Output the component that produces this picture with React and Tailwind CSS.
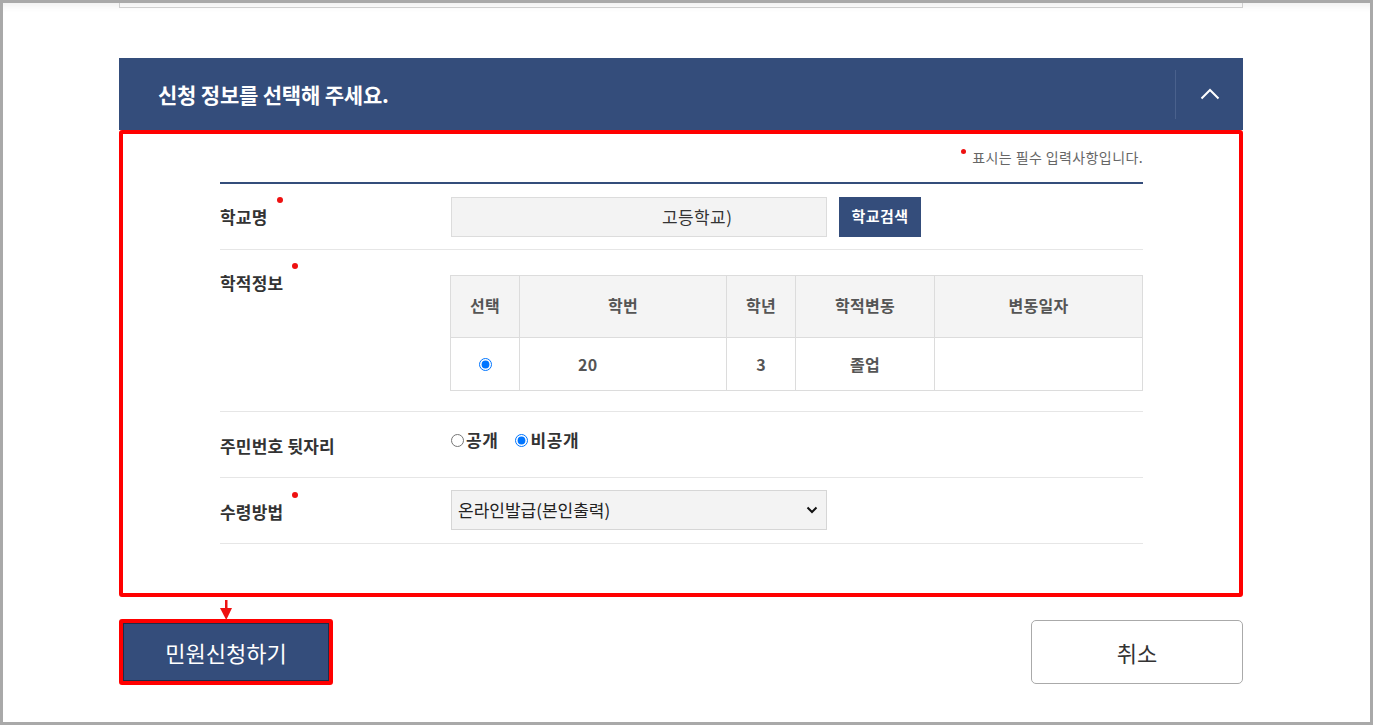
import { useState } from "react";

const Dot = () => (
  <span className="absolute -right-[15px] -top-[8px] w-[6px] h-[6px] rounded-full bg-[#ee1111]" />
);

function Label({ children, required }) {
  return (
    <span className="relative inline-block text-[17px] leading-[24px] font-bold text-[#333] tracking-[0.2px]">
      {children}
      {required && <Dot />}
    </span>
  );
}

export default function App() {
  const [privacy, setPrivacy] = useState("private");

  return (
    <div className="w-[1373px] h-[725px] border-[3px] border-[#a9a9a9] bg-white overflow-hidden shadow-[inset_0_10px_8px_-8px_rgba(0,0,0,0.08)] font-['Noto_Sans_CJK_KR',sans-serif] text-[#333]">
      <div className="ml-[116px] w-[1124px] relative">
        {/* previous box, scrolled off */}
        <div className="h-[5px] border-x border-b border-[#cfcfcf]" />

        {/* section header */}
        <div className="mt-[50px] h-[72px] bg-[#344d7b] flex items-center">
          <h2 className="flex-1 pl-[39px] text-white text-[21px] leading-[28px] font-bold tracking-[-0.2px]">
            신청 정보를 선택해 주세요.
          </h2>
          <div className="w-px h-[49px] bg-[#4a618c]" />
          <div className="w-[67px] flex justify-center">
            <svg width="20" height="12" viewBox="0 0 20 12" fill="none">
              <path d="M1.5 10.5 L10 2 L18.5 10.5" stroke="#fff" strokeWidth="2" />
            </svg>
          </div>
        </div>

        {/* form body (highlighted) */}
        <div className="h-[467px] border-4 border-[#ff0000] rounded-[3px]">
          <div className="ml-[97px] w-[923px]">
            <div className="pt-[13px] flex justify-end items-center text-[14px] leading-[20px] text-[#666] tracking-[0.4px]">
              <span className="relative mr-[6px] -top-[6px] w-[5px] h-[5px] rounded-full bg-[#ee1111]" />
              표시는 필수 입력사항입니다.
            </div>
            <div className="mt-[15px] h-[2px] bg-[#344d7b]" />

            {/* 학교명 */}
            <div className="h-[66px] flex items-center border-b border-[#e6e6e6]">
              <div className="w-[231px]">
                <Label required>학교명</Label>
              </div>
              <div className="w-[376px] h-[40px] bg-[#f3f3f3] border border-[#dcdcdc] flex items-center pl-[210px] text-[17px] tracking-[0.4px] text-[#333]">
                고등학교)
              </div>
              <button className="ml-[12px] w-[82px] h-[40px] bg-[#344d7b] text-white text-[15px] font-bold tracking-[0.5px]">
                학교검색
              </button>
            </div>

            {/* 학적정보 */}
            <div className="flex items-start border-b border-[#e6e6e6]">
              <div className="w-[231px] pt-[21px]">
                <Label required>학적정보</Label>
              </div>
              <div className="pt-[25px] pb-[20px]">
                <div className="grid grid-cols-[69px_207px_69px_139px_208px] border-t border-l border-[#dcdcdc] text-[16px] font-bold text-[#555] tracking-[0.3px]">
                  {["선택", "학번", "학년", "학적변동", "변동일자"].map((h) => (
                    <div key={h} className="h-[62px] pb-[3px] bg-[#f4f4f4] border-r border-b border-[#dcdcdc] flex items-center justify-center">
                      {h}
                    </div>
                  ))}
                  <div className="h-[53px] border-r border-b border-[#dcdcdc] flex items-center justify-center">
                    <input type="radio" name="rec" defaultChecked className="w-[13px] h-[13px] m-0" />
                  </div>
                  <div className="h-[53px] border-r border-b border-[#dcdcdc] flex items-center pl-[58px]">20</div>
                  <div className="h-[53px] border-r border-b border-[#dcdcdc] flex items-center justify-center">3</div>
                  <div className="h-[53px] border-r border-b border-[#dcdcdc] flex items-center justify-center">졸업</div>
                  <div className="h-[53px] border-r border-b border-[#dcdcdc]" />
                </div>
              </div>
            </div>

            {/* 주민번호 뒷자리 */}
            <div className="h-[66px] flex items-start border-b border-[#e6e6e6]">
              <div className="w-[231px] pt-[22px]">
                <Label>주민번호 뒷자리</Label>
              </div>
              <div className="pt-[16px] flex items-center text-[17px] leading-[24px] font-bold text-[#333] tracking-[0.6px]">
                <label className="flex items-center">
                  <input type="radio" name="priv" checked={privacy === "public"} onChange={() => setPrivacy("public")} className="w-[13px] h-[13px] m-0 mr-[2px]" />
                  공개
                </label>
                <label className="flex items-center ml-[17px]">
                  <input type="radio" name="priv" checked={privacy === "private"} onChange={() => setPrivacy("private")} className="w-[13px] h-[13px] m-0 mr-[2px]" />
                  비공개
                </label>
              </div>
            </div>

            {/* 수령방법 */}
            <div className="h-[66px] flex items-start border-b border-[#e6e6e6]">
              <div className="w-[231px] pt-[22px]">
                <Label required>수령방법</Label>
              </div>
              <div className="mt-[12px] w-[376px] h-[40px] bg-[#f3f3f3] border border-[#d6d6d6] flex items-center justify-between pl-[6px] pr-[8px] text-[17px] text-[#222]">
                <span>온라인발급(본인출력)</span>
                <svg width="12" height="8" viewBox="0 0 12 8" fill="none">
                  <path d="M1.5 1.5 L6 6 L10.5 1.5" stroke="#111" strokeWidth="2" />
                </svg>
              </div>
            </div>
          </div>
        </div>

        {/* arrow pointing at submit */}
        <svg className="absolute left-[100px] top-[597px]" width="14" height="22" viewBox="0 0 14 22">
          <rect x="6" y="0" width="2.5" height="10" fill="#ee1111" />
          <path d="M1 8 L13 8 L7.25 20 Z" fill="#ee1111" />
        </svg>

        {/* actions */}
        <div className="mt-[22px] flex justify-between items-start">
          <div className="w-[214px] h-[66px] border-4 border-[#ff0000] rounded-[3px]">
            <button className="w-full h-full bg-[#344d7b] border border-[#1e2d48] text-white text-[22px]">
              민원신청하기
            </button>
          </div>
          <button className="mt-[1px] w-[212px] h-[64px] border border-[#aaaaaa] rounded-[5px] bg-white text-[22px] text-[#333]">
            취소
          </button>
        </div>
      </div>
    </div>
  );
}
